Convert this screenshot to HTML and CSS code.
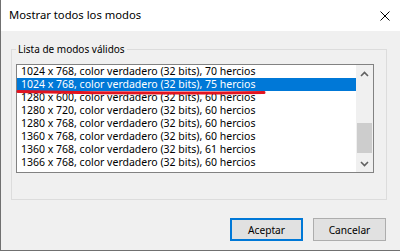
FILE: index.html
```html
<!DOCTYPE html>
<html lang="es">
<head>
<meta charset="utf-8">
<title>Mostrar todos los modos</title>
<link rel="stylesheet" href="styles.css">
</head>
<body>
<div class="window">
  <div class="titlebar">
    <span class="title">Mostrar todos los modos</span>
    <svg class="close" width="10" height="10" viewBox="0 0 10 10" aria-hidden="true">
      <path d="M0.5 0.5 L9.5 9.5 M9.5 0.5 L0.5 9.5" stroke="#000" stroke-width="1" fill="none"/>
    </svg>
  </div>
  <div class="content">
    <fieldset class="group">
      <legend class="group-label">Lista de modos válidos</legend>
      <div class="listbox">
        <ul class="rows">
          <li class="row">1024 x 768, color verdadero (32 bits), 70 hercios</li>
          <li class="row selected">1024 x 768, color verdadero (32 bits), 75 hercios</li>
          <li class="row">1280 x 600, color verdadero (32 bits), 60 hercios</li>
          <li class="row">1280 x 720, color verdadero (32 bits), 60 hercios</li>
          <li class="row">1280 x 768, color verdadero (32 bits), 60 hercios</li>
          <li class="row">1360 x 768, color verdadero (32 bits), 60 hercios</li>
          <li class="row">1360 x 768, color verdadero (32 bits), 61 hercios</li>
          <li class="row">1366 x 768, color verdadero (32 bits), 60 hercios</li>
        </ul>
        <div class="scrollbar">
          <div class="arrow">
            <svg width="9" height="6" viewBox="0 0 9 6"><path d="M1 5 L4.5 1.5 L8 5" stroke="#606060" stroke-width="1.6" fill="none"/></svg>
          </div>
          <div class="track"><div class="thumb"></div></div>
          <div class="arrow">
            <svg width="9" height="6" viewBox="0 0 9 6"><path d="M1 1 L4.5 4.5 L8 1" stroke="#606060" stroke-width="1.6" fill="none"/></svg>
          </div>
        </div>
      </div>
    </fieldset>
    <div class="buttons">
      <button class="btn default">Aceptar</button>
      <button class="btn">Cancelar</button>
    </div>
  </div>
  <svg class="annotation" width="400" height="251" viewBox="0 0 400 251" aria-hidden="true">
    <path d="M18 91.5 Q140 94 264 92.5" stroke="#e2131f" stroke-width="3" stroke-linecap="round" fill="none"/>
  </svg>
</div>
</body>
</html>
```
FILE: styles.css
```css
html, body {
  margin: 0;
  padding: 0;
  background: #f0f0f0;
}
body {
  font-family: "Noto Sans", "Open Sans", sans-serif;
  color: #000;
}
.window {
  position: relative;
  width: 399px;
  height: 250px;
  border-left: 1px solid #707070;
  border-bottom: 1px solid #707070;
  background: #f0f0f0;
  overflow: hidden;
}
.titlebar {
  height: 31px;
  background: #fff;
  display: flex;
  align-items: center;
  justify-content: space-between;
  padding: 0 10px 0 8px;
}
.title {
  font-size: 11.25px;
  line-height: 16px;
  margin-top: -1px;
}
.close {
  display: block;
  margin-top: 0;
}
.content {
  display: flex;
  flex-direction: column;
}
.group {
  margin: 11px 13px 0 10px;
  padding: 8px 12px 26px 4px;
  border: 1px solid #dcdcdc;
  min-width: 0;
}
.group-label {
  font-size: 10px;
  line-height: 14px;
  padding: 0 2px;
  margin: 0;
}
.listbox {
  display: flex;
  height: 107px;
  border: 1px solid #828282;
  background: #fff;
}
.rows {
  list-style: none;
  margin: 0;
  padding: 0;
  flex: 1;
  min-width: 0;
}
.row {
  height: 13px;
  line-height: 13px;
  padding-left: 4px;
  font-size: 10.5px;
  white-space: nowrap;
}
.row.selected {
  background: #0078d7;
  color: #fff;
}
.scrollbar {
  width: 17px;
  display: flex;
  flex-direction: column;
  background: #f0f0f0;
}
.arrow {
  height: 17px;
  display: flex;
  align-items: center;
  justify-content: center;
}
.track {
  flex: 1;
  padding-top: 41px;
}
.thumb {
  height: 30px;
  margin: 0 1px;
  background: #cdcdcd;
}
.buttons {
  display: flex;
  justify-content: flex-end;
  gap: 10px;
  margin: 18px 14px 0 0;
}
.btn {
  width: 73px;
  height: 23px;
  padding: 0;
  font-family: "Noto Sans", "Open Sans", sans-serif;
  font-size: 10.2px;
  color: #000;
  background: #e1e1e1;
  border: 1px solid #adadad;
  border-radius: 0;
}
.btn.default {
  border: 2px solid #0078d7;
}
.annotation {
  position: absolute;
  left: -1px;
  top: 0;
  pointer-events: none;
}
```
